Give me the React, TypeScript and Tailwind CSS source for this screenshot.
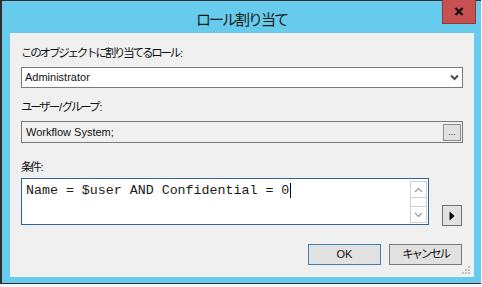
import React from 'react'

const jp = "font-['Liberation_Sans','Noto_Sans_CJK_JP',sans-serif] text-[11.5px] tracking-[-2.2px] text-[#111]"
const latin = "font-['Liberation_Sans',sans-serif] text-[11px] text-[#111]"

// ascii chars (":" "/") keep normal spacing, kana get squeezed
function JpText({ text }: { text: string }) {
  const parts = text.split(/([\x20-\x7e]+)/).filter(Boolean)
  return (
    <>
      {parts.map((p, i) =>
        /^[\x20-\x7e]+$/.test(p) ? (
          <span key={i} className="tracking-[-0.5px] pl-[1px]">{p}</span>
        ) : (
          <span key={i}>{p}</span>
        )
      )}
    </>
  )
}

function Chevron({ up = false, color = '#9a9a9a' }: { up?: boolean; color?: string }) {
  return (
    <svg width="9" height="6" viewBox="0 0 9 6">
      <polyline
        points={up ? '1,5 4.5,1.5 8,5' : '1,1 4.5,4.5 8,1'}
        fill="none"
        stroke={color}
        strokeWidth="1.2"
      />
    </svg>
  )
}

export default function App() {
  return (
    <div className="w-[482px] h-[287px] bg-[#f7f7f7] overflow-hidden">
      {/* window frame */}
      <div className="w-[481px] h-[284px] bg-[#66cbec] border-l-2 border-t border-b border-[#2e2e2e] flex flex-col">
        {/* title bar */}
        <div className="relative h-[32px] shrink-0 flex items-center justify-center">
          <span className="pt-[7px] font-['Liberation_Sans','Noto_Sans_CJK_JP',sans-serif] text-[15px] tracking-[-2px] text-[#1b1b1b]">
            ロール割り当て
          </span>
          <div className="absolute right-[5px] top-[-1px] w-[34px] h-[24px] bg-[#c75050] border border-t-0 border-[#8a3a3a] flex items-center justify-center">
            <svg width="10" height="9" viewBox="0 0 10 9">
              <path d="M1.5 1 L8.5 8 M8.5 1 L1.5 8" stroke="#111" strokeWidth="2.3" />
            </svg>
          </div>
        </div>

        {/* client area */}
        <div className="relative ml-[8px] w-[464px] h-[244px] bg-[#f0f0f0] px-[11px] flex flex-col">
          <div className={`mt-[13px] h-[14px] leading-[14px] ${jp}`}>
            <JpText text="このオブジェクトに割り当てるロール:" />
          </div>

          <div className="mt-[7px] h-[21px] bg-white border border-[#7a7a7a] flex items-center justify-between pl-[3px] pr-[3px]">
            <span className={latin}>Administrator</span>
            <svg width="9" height="7" viewBox="0 0 9 7">
              <polyline points="1,1.5 4.5,5 8,1.5" fill="none" stroke="#4a4a4a" strokeWidth="2" />
            </svg>
          </div>

          <div className={`mt-[12px] h-[14px] leading-[14px] ${jp}`}>
            <JpText text="ユーザー/グループ:" />
          </div>

          <div className="mt-[7px] h-[22px] bg-[#f0f0f0] border border-[#7a7a7a] flex items-center justify-between pl-[4px] pr-[1px]">
            <span className={latin}>Workflow System;</span>
            <div className="w-[18px] h-[17px] bg-[#e1e1e1] border border-[#8c8c8c] flex items-end justify-center pb-[3px]">
              <span className="font-['Liberation_Sans',sans-serif] text-[9px] leading-[9px] text-[#333]">...</span>
            </div>
          </div>

          <div className={`mt-[17px] h-[14px] leading-[14px] ${jp} tracking-[-0.5px]`}>
            <JpText text="条件:" />
          </div>

          <div className="mt-[4px] h-[48px] flex items-end gap-[13px]">
            <div className="w-[408px] h-[47px] self-start bg-white border border-[#2c6495] flex">
              <div className="flex-1 pl-[4px] pt-[4px] flex items-start">
                <span className="font-['Liberation_Mono',monospace] text-[13.3px] leading-[15px] text-[#1a1a1a] whitespace-pre">
                  Name = $user AND Confidential = 0
                </span>
                <span className="w-px h-[15px] bg-black ml-[1px]" />
              </div>
              <div className="w-[17px] mt-[2px] mb-[1px] mr-[1px] border border-[#d0d0d0] flex flex-col">
                <div className="h-[16px] border-b border-[#d0d0d0] flex items-center justify-center">
                  <Chevron up />
                </div>
                <div className="flex-1" />
                <div className="h-[16px] border-t border-[#d0d0d0] flex items-center justify-center">
                  <Chevron />
                </div>
              </div>
            </div>
            <div className="w-[20px] h-[21px] bg-[#e1e1e1] border border-[#707070] flex items-center justify-center">
              <svg width="6" height="10" viewBox="0 0 6 10">
                <polygon points="0.5,0.5 5.5,5 0.5,9.5" fill="#000" />
              </svg>
            </div>
          </div>

          <div className="mt-[18px] h-[21px] flex justify-end gap-[8px] pr-[1px]">
            <div className="w-[73px] h-[21px] bg-[#e1e1e1] border border-[#3c7fb1] flex items-center justify-center">
              <span className={latin}>OK</span>
            </div>
            <div className="w-[73px] h-[21px] bg-[#e1e1e1] border border-[#7a7a7a] flex items-center justify-center">
              <span className={jp}>キャンセル</span>
            </div>
          </div>

          {/* size grip */}
          <svg className="absolute right-[3px] bottom-[2px]" width="10" height="10" viewBox="0 0 10 10">
            <rect x="7" y="1" width="2" height="2" fill="#c2c2c2" />
            <rect x="4" y="4" width="2" height="2" fill="#c2c2c2" />
            <rect x="7" y="4" width="2" height="2" fill="#c2c2c2" />
            <rect x="1" y="7" width="2" height="2" fill="#c2c2c2" />
            <rect x="4" y="7" width="2" height="2" fill="#c2c2c2" />
            <rect x="7" y="7" width="2" height="2" fill="#c2c2c2" />
          </svg>
        </div>
      </div>
    </div>
  )
}
